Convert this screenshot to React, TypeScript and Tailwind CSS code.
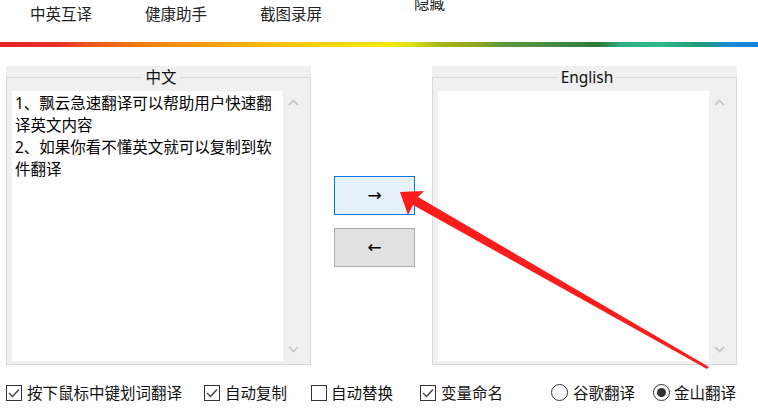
import React from "react";

const FONT = { fontFamily: '"Noto Sans", "Noto Sans CJK SC", sans-serif' };

function Chevron({ up }: { up: boolean }) {
  return (
    <svg width="11" height="7" viewBox="0 0 11 7">
      <path
        d={up ? "M1 6 L5.5 1.5 L10 6" : "M1 1 L5.5 5.5 L10 1"}
        fill="none"
        stroke="#c4c4c4"
        strokeWidth="1.6"
      />
    </svg>
  );
}

function Group({ title, children }: { title: string; children?: React.ReactNode }) {
  return (
    <div className="w-[305px] h-[299px] bg-[#f0f0f0]">
      <fieldset className="h-[299px] border border-[#d9d9d9] pl-[5px] pt-[3px]">
        <legend align="center" className="mx-auto px-[3px] text-[15.5px] leading-[22px] text-[#111]">
          {title}
        </legend>
        <div className="flex h-[270px]">
          <div className="w-[271px] h-[270px] bg-white px-[3px] pt-[1px] text-[15.5px] leading-[22px] text-black">
            {children}
          </div>
          <div className="w-[20px] h-[270px] flex flex-col items-center justify-between pt-[8px] pb-[8px]">
            <Chevron up />
            <Chevron up={false} />
          </div>
        </div>
      </fieldset>
    </div>
  );
}

function CheckBox({ checked }: { checked: boolean }) {
  return (
    <div className="w-[16px] h-[16px] border border-[#333] bg-white flex items-center justify-center">
      {checked && (
        <svg width="12" height="10" viewBox="0 0 12 10">
          <path d="M1 5 L4.5 8.5 L11 1.5" fill="none" stroke="#444" strokeWidth="1.4" />
        </svg>
      )}
    </div>
  );
}

function Radio({ checked }: { checked: boolean }) {
  return (
    <div className="w-[17px] h-[17px] rounded-full border border-[#333] bg-white flex items-center justify-center">
      {checked && <div className="w-[9px] h-[9px] rounded-full bg-[#333]" />}
    </div>
  );
}

export default function App() {
  return (
    <div className="w-[758px] h-[413px] bg-white overflow-hidden relative" style={FONT}>
      {/* tabs */}
      <div className="h-[42px] flex items-start text-[15.5px] leading-[22px] text-[#222]">
        <span className="ml-[30px] mt-[3px]">中英互译</span>
        <span className="ml-[53px] mt-[3px]">健康助手</span>
        <span className="ml-[53px] mt-[3px]">截图录屏</span>
        <span className="ml-[92px] mt-[-8px]">隐藏</span>
      </div>
      {/* rainbow stripe */}
      <div className="h-[5px] bg-[linear-gradient(90deg,#e5232a_0px,#e8322a_60px,#ec5a1c_90px,#f27b12_140px,#f79a12_200px,#fbb80f_260px,#fdd10a_320px,#fbe80a_380px,#dde01a_410px,#a8b61a_440px,#8ea51f_480px,#5b9a3e_500px,#478c40_550px,#2b7a3a_600px,#2fae7f_620px,#2fb98b_660px,#1e9a78_700px,#1b8ad8_730px,#1686d6_758px)]" />
      {/* main */}
      <div className="flex mt-[19px]">
        <div className="ml-[6px]">
          <Group title="中文">
            <div>1、飘云急速翻译可以帮助用户快速翻译英文内容</div>
            <div>2、如果你看不懂英文就可以复制到软件翻译</div>
          </Group>
        </div>
        <div className="w-[121px] flex flex-col">
          <button className="ml-[23px] mt-[110px] w-[81px] h-[39px] bg-[#e5f1fb] border border-[#0078d7] flex items-center justify-center text-[17px] leading-none text-black" style={{ fontFamily: '"DejaVu Sans", sans-serif' }}>
            →
          </button>
          <button className="ml-[23px] mt-[13px] w-[81px] h-[39px] bg-[#e1e1e1] border border-[#adadad] flex items-center justify-center text-[17px] leading-none text-black" style={{ fontFamily: '"DejaVu Sans", sans-serif' }}>
            ←
          </button>
        </div>
        <Group title="English" />
      </div>
      {/* bottom options */}
      <div className="h-[48px] flex items-center text-[15.5px] leading-[22px] text-[#111] pt-[7px]">
        <div className="ml-[6px] flex items-center gap-[5px]">
          <CheckBox checked />
          <span>按下鼠标中键划词翻译</span>
        </div>
        <div className="ml-[22px] flex items-center gap-[5px]">
          <CheckBox checked />
          <span>自动复制</span>
        </div>
        <div className="ml-[24px] flex items-center gap-[4px]">
          <CheckBox checked={false} />
          <span>自动替换</span>
        </div>
        <div className="ml-[27px] flex items-center gap-[5px]">
          <CheckBox checked />
          <span>变量命名</span>
        </div>
        <div className="ml-[48px] flex items-center gap-[5px]">
          <Radio checked={false} />
          <span>谷歌翻译</span>
        </div>
        <div className="ml-[18px] flex items-center gap-[4px]">
          <Radio checked />
          <span>金山翻译</span>
        </div>
      </div>
      {/* red annotation arrow */}
      <svg className="absolute left-0 top-0 pointer-events-none" width="758" height="413" viewBox="0 0 758 413">
        <polygon
          points="400,192 424,191 418,197 709,367 707,369 413,205 408,215"
          fill="#fb1c1c"
        />
      </svg>
    </div>
  );
}
